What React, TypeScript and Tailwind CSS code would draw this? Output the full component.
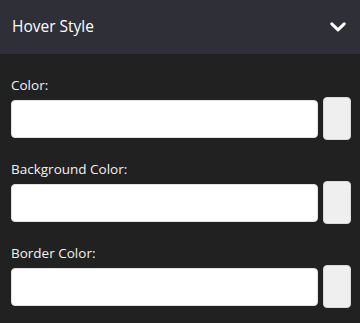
const FIELDS = ["Color:", "Background Color:", "Border Color:"];

function ColorField({ label }: { label: string }) {
  return (
    <div className="mb-[19px]">
      <label className="block h-5 text-[13.5px] leading-5 text-[#f2f2f2] mb-[2px]">
        {label}
      </label>
      <div className="flex items-center gap-[5px]">
        <input
          type="text"
          className="h-[38px] flex-1 rounded-[4px] border border-[#e2e2e2] bg-white px-2 text-sm text-black outline-none"
        />
        <button className="h-[43px] w-[28px] shrink-0 rounded-[4px] border border-[#d9d9d9] bg-[#efefef]" />
      </div>
    </div>
  );
}

export default function App() {
  return (
    <div
      className="w-[360px] h-[323px] overflow-hidden bg-[#212121]"
      style={{ fontFamily: '"Open Sans", sans-serif' }}
    >
      <div className="flex h-[54px] items-center justify-between bg-[#2e2f37] pl-3 pr-[14px]">
        <span className="text-[15.5px] text-white">Hover Style</span>
        <svg width="16" height="10" viewBox="0 0 16 10" fill="none">
          <polyline
            points="1.8,1.8 8,7.8 14.2,1.8"
            stroke="white"
            strokeWidth="3"
            strokeLinecap="round"
            strokeLinejoin="round"
          />
        </svg>
      </div>
      <div className="pl-[11px] pr-[9px] pt-[21px]">
        {FIELDS.map((f) => (
          <ColorField key={f} label={f} />
        ))}
      </div>
    </div>
  );
}
